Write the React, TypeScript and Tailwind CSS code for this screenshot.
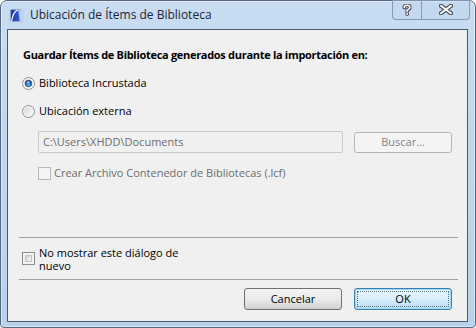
import React from 'react';

const font = { fontFamily: '"Open Sans", "Noto Sans", sans-serif' };

const AppIcon = () => (
  <svg width="15" height="15" viewBox="0 0 15 15">
    <defs>
      <linearGradient id="ic" x1="0" y1="0" x2="1" y2="0">
        <stop offset="0" stopColor="#1a38a8" />
        <stop offset="1" stopColor="#3d68d8" />
      </linearGradient>
      <linearGradient id="ic2" x1="0" y1="0" x2="1" y2="0">
        <stop offset="0" stopColor="#6f95e8" />
        <stop offset="1" stopColor="#dfe8fa" />
      </linearGradient>
    </defs>
    <rect x="0.5" y="0.5" width="14" height="14" fill="#ffffff" stroke="#c9d4e6" />
    <rect x="1.5" y="1.5" width="12" height="12" fill="url(#ic)" />
    <path d="M8 1.5 L13.5 1.5 L13.5 13.5 L10.5 13.5 Q10 5 8 1.5 Z" fill="url(#ic2)" />
    <path d="M2.5 13.5 Q4 4 8.5 2" stroke="#ffffff" strokeWidth="1.2" fill="none" />
  </svg>
);

const HelpGlyph = () => (
  <svg width="10" height="12" viewBox="0 0 10 12">
    <path d="M2.2 3.6 Q2.2 1.3 5 1.3 Q7.8 1.3 7.8 3.5 Q7.8 5 5.2 6 L5.2 7.6" stroke="#4b4f57" strokeWidth="3.6" fill="none" strokeLinecap="round" />
    <circle cx="5.2" cy="10" r="1.9" fill="#4b4f57" />
    <path d="M2.2 3.6 Q2.2 1.3 5 1.3 Q7.8 1.3 7.8 3.5 Q7.8 5 5.2 6 L5.2 7.6" stroke="#ffffff" strokeWidth="1.6" fill="none" strokeLinecap="round" />
    <circle cx="5.2" cy="10" r="0.9" fill="#ffffff" />
  </svg>
);

const CloseGlyph = () => (
  <svg width="14" height="11" viewBox="0 0 14 11">
    <path d="M2 1.8 L12 9.2 M12 1.8 L2 9.2" stroke="#4b4f57" strokeWidth="4.2" strokeLinecap="round" />
    <path d="M2 1.8 L12 9.2 M12 1.8 L2 9.2" stroke="#ffffff" strokeWidth="2" strokeLinecap="round" />
  </svg>
);

const Radio = ({ checked }: { checked?: boolean }) => (
  <svg width="13" height="13" viewBox="0 0 13 13" className="shrink-0">
    <defs>
      <linearGradient id="rb" x1="0" y1="0" x2="1" y2="1">
        <stop offset="0" stopColor="#d6d6d6" />
        <stop offset="1" stopColor="#fdfdfd" />
      </linearGradient>
      <radialGradient id="rd" cx="0.5" cy="0.7" r="0.7">
        <stop offset="0" stopColor="#58c1f2" />
        <stop offset="0.6" stopColor="#1b62b8" />
        <stop offset="1" stopColor="#0c2e6e" />
      </radialGradient>
    </defs>
    <circle cx="6.5" cy="6.5" r="6" fill="#f6f6f6" stroke="#8f9092" />
    <circle cx="6.5" cy="6.5" r="4.6" fill="url(#rb)" />
    {checked && (
      <>
        <circle cx="6.5" cy="6.5" r="3.3" fill="url(#rd)" stroke="#173d7a" strokeWidth="0.6" />
        <ellipse cx="6.2" cy="5.2" rx="1.6" ry="1" fill="#ffffff" opacity="0.55" />
      </>
    )}
  </svg>
);

const Check = ({ disabled }: { disabled?: boolean }) =>
  disabled ? (
    <div className="w-[13px] h-[13px] shrink-0 border border-[#b8b8b8] bg-[#f4f4f4]" />
  ) : (
    <div className="w-[13px] h-[13px] shrink-0 border border-[#8e8f8f] bg-[#f4f4f4] p-[2px]">
      <div className="w-full h-full border border-[#c4c4c4] bg-gradient-to-br from-[#d0d0d0] to-[#f8f8f8]" />
    </div>
  );

export default function App() {
  return (
    <div className="w-[476px] h-[328px] bg-white" style={font}>
      <div className="w-[476px] h-[328px] flex flex-col rounded-t-[7px] rounded-b-[4px] border border-[#56677e] bg-gradient-to-b from-[#c8dcf2] to-[#b9d1ea] shadow-[inset_0_0_0_1px_rgba(255,255,255,0.45)]">
        {/* title bar */}
        <div className="h-[28px] flex items-start shrink-0">
          <div className="ml-[8px] mt-[7px]">
            <AppIcon />
          </div>
          <div className="ml-[6px] mt-[5px] text-[12px] leading-[18px] text-[#1c2533]">Ubicación de Ítems de Biblioteca</div>
          <div className="ml-auto mr-[5px] -mt-px flex h-[20px] rounded-b-[4px] border border-t-0 border-[#8a9bb1] bg-[#bed4ec]/40">
            <div className="w-[29px] flex items-center justify-center border-r border-[#8a9bb1]">
              <HelpGlyph />
            </div>
            <div className="w-[47px] flex items-center justify-center">
              <CloseGlyph />
            </div>
          </div>
        </div>

        {/* client area */}
        <div className="ml-[6px] mr-[7px] mb-[5px] flex-1 border border-[#4a5a6e] bg-[#f0f0f0] flex flex-col text-[11px] text-black">
          <div className="mt-[17px] ml-[15px] leading-[16px] font-bold tracking-[-0.3px]">
            Guardar Ítems de Biblioteca generados durante la importación en:
          </div>

          <div className="mt-[12px] ml-[14px] h-[16px] flex items-center gap-[4px]">
            <Radio checked />
            <span className="leading-[16px]">Biblioteca Incrustada</span>
          </div>

          <div className="mt-[12px] ml-[14px] h-[16px] flex items-center gap-[4px]">
            <Radio />
            <span className="leading-[16px]">Ubicación externa</span>
          </div>

          <div className="mt-[12px] ml-[30px] flex items-center">
            <div className="w-[305px] h-[22px] rounded-[2px] border border-[#c9c9c9] bg-[#f0f0f0] flex items-center pl-[4px] text-[#6d6d6d]">
              C:\Users\XHDD\Documents
            </div>
            <div className="ml-[11px] w-[98px] h-[21px] rounded-[3px] border border-[#b5b5b5] bg-[#f4f4f4] flex items-center justify-center text-[#838383]">
              Buscar...
            </div>
          </div>

          <div className="mt-[12px] ml-[30px] h-[16px] flex items-center gap-[3px] text-[#6d6d6d]">
            <Check disabled />
            <span className="leading-[16px]">Crear Archivo Contenedor de Bibliotecas (.lcf)</span>
          </div>

          <div className="mt-[56px] ml-[11px] mr-[9px] h-px bg-[#a0a0a0]" />

          <div className="mt-[8px] ml-[14px] flex items-start gap-[4px]">
            <div className="mt-[6px]">
              <Check />
            </div>
            <span className="w-[150px] leading-[13px]">No mostrar este diálogo de nuevo</span>
          </div>

          <div className="mt-[7px] ml-[11px] mr-[9px] h-px bg-[#a0a0a0]" />

          <div className="mt-[8px] flex justify-end gap-[12px] mr-[15px]">
            <div className="w-[98px] h-[22px] rounded-[3px] border border-[#707070] bg-gradient-to-b from-[#f3f3f3] via-[#ebebeb] to-[#d0d0d0] flex items-center justify-center">
              Cancelar
            </div>
            <div className="w-[98px] h-[22px] rounded-[3px] border border-[#3c7fb1] bg-gradient-to-b from-[#ecf7fd] via-[#d7eefb] to-[#b8def5] p-[2px] shadow-[inset_0_0_0_1px_#9cd8f8]">
              <div className="w-full h-full border border-dotted border-[#5a6e82] flex items-center justify-center">OK</div>
            </div>
          </div>
        </div>
      </div>
    </div>
  );
}
